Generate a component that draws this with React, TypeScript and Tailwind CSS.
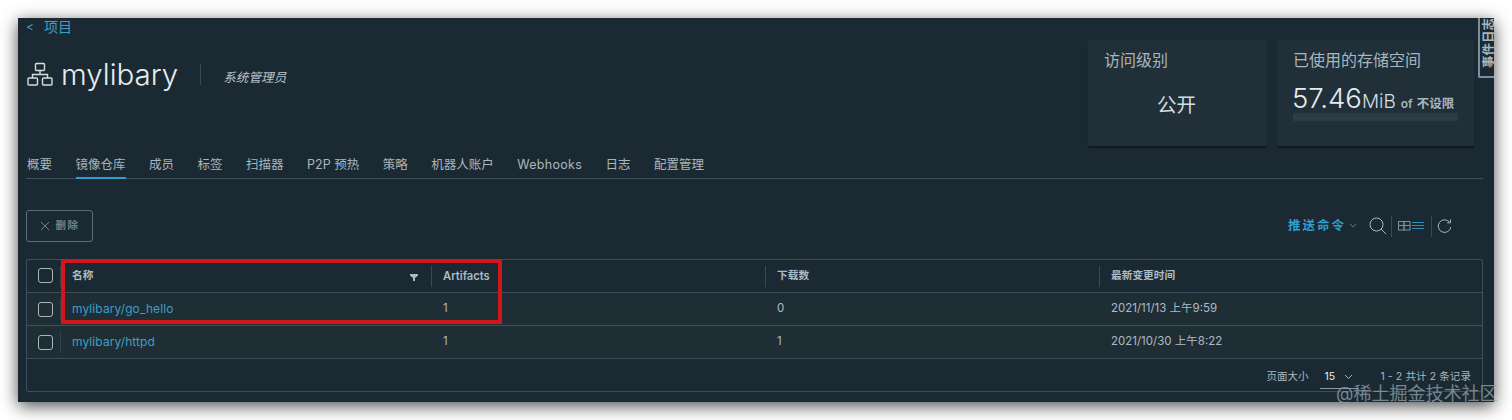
import React from "react";

const font = { fontFamily: '"Inter","Noto Sans CJK SC",sans-serif' };

function Checkbox() {
  return <span className="block w-[15px] h-[15px] rounded-[3px] border border-[#a9b6be] shrink-0" />;
}

function Row({ name, art, dl, time }: { name: string; art: string; dl: string; time: string }) {
  return (
    <div className="flex h-[33px] items-center border-b border-[#3d4f5a] bg-[#1f2d35] text-[11.5px] text-[#adbbc4]">
      <div className="w-[33px] flex justify-center pl-[3px]"><Checkbox /></div>
      <div className="w-[371px] pl-[11px] border-l border-[#33434d] h-[21px] flex items-center text-[#3d9fc4] text-[12px] tracking-[0.1px]">{name}</div>
      <div className="w-[334px] pl-[12px]">{art}</div>
      <div className="w-[334px] pl-[12px]">{dl}</div>
      <div className="flex-1 pl-[12px]">{time}</div>
    </div>
  );
}

function Th({ w, children, first }: { w: string; children: React.ReactNode; first?: boolean }) {
  return (
    <div className={`${w} h-[21px] flex items-center font-semibold text-[10.7px] text-[#adbbc4] ${first ? "pl-[11px] border-l border-[#33434d]" : "pl-[11px] border-l border-[#3a4a54]"}`}>
      {children}
    </div>
  );
}

export default function App() {
  return (
    <div className="relative w-[1512px] h-[420px] bg-white pt-[18px] pl-[18px] overflow-hidden" style={font}>
      <div className="relative w-[1476px] h-[384px] bg-[#1b2a32] shadow-[0_4px_16px_rgba(0,0,0,0.7)] overflow-hidden text-[#adbbc4] px-[8px]">
        {/* breadcrumb */}
        <div className="h-[18px] flex items-center gap-[10px] text-[14px] leading-none text-[#3d9fc4]">
          <span className="text-[12px]">&lt;</span><span>项目</span>
        </div>

        {/* header */}
        <div className="flex justify-between h-[92px]">
          <div className="flex items-center h-[77px]">
            <svg width="26" height="26" viewBox="0 0 26 26" fill="none" stroke="#d5dde2" strokeWidth="1.4" className="ml-[1px]">
              <rect x="8.5" y="1.5" width="9" height="7" rx="1" />
              <rect x="1" y="16" width="9.5" height="7" rx="1" />
              <rect x="15.5" y="16" width="9.5" height="7" rx="1" />
              <path d="M13 8.5V12.5M5.5 16V12.5H20.5V16" />
            </svg>
            <span className="ml-[8px] text-[29.5px] font-light leading-none text-[#e6ecef]">mylibary</span>
            <span className="ml-[22px] w-px h-[21px] bg-[#3a4a54]" />
            <span className="ml-[22px] mt-[8px] text-[12.6px] italic text-[#b9c5cc]">系统管理员</span>
          </div>
          <div className="flex gap-[10px] mt-[4px] mr-[12px] h-[106px]">
            <div className="w-[179px] h-[106px] bg-[#202f38] shadow-[0_2px_1px_#10191e] rounded-[2px] px-[16px] pt-[8px]">
              <div className="text-[16px] leading-[24px] text-[#a9b6be]">访问级别</div>
              <div className="mt-[19px] text-[19.5px] leading-[28px] text-[#d5dde2] text-center pr-[2px]">公开</div>
            </div>
            <div className="w-[197px] h-[106px] bg-[#202f38] shadow-[0_2px_1px_#10191e] rounded-[2px] pl-[16px] pr-[16px] pt-[8px]">
              <div className="text-[16px] leading-[24px] text-[#a9b6be]">已使用的存储空间</div>
              <div className="flex items-baseline mt-[9px] h-[32px] whitespace-nowrap">
                <span className="-ml-[1px] text-[27.5px] font-light leading-[34px] text-[#e6ecef]">57.46</span>
                <span className="text-[19px] font-light text-[#d5dde2]">MiB</span>
                <span className="ml-[5px] text-[12px] font-semibold text-[#a9b6be]">of</span>
                <span className="ml-[4px] text-[12.5px] font-semibold text-[#a9b6be]">不设限</span>
              </div>
              <div className="h-[8px] rounded-[1px] bg-[#2b3c46]" />
            </div>
          </div>
        </div>

        {/* tabs */}
        <div className="flex h-[41px] mt-[10px] items-end border-b border-[#3d4f5a] mr-[3px] text-[12.5px] leading-none text-[#a9b6be]">
          <div className="flex gap-[23.5px] pl-[1px] whitespace-nowrap">
            <span className="pb-[7px]">概要</span>
            <span className="pb-[5px] border-b-2 border-[#2e9fcf] -mb-px">镜像仓库</span>
            <span className="pb-[7px]">成员</span>
            <span className="pb-[7px]">标签</span>
            <span className="pb-[7px]">扫描器</span>
            <span className="pb-[7px]">P2P 预热</span>
            <span className="pb-[7px]">策略</span>
            <span className="pb-[7px]">机器人账户</span>
            <span className="pb-[7px] tracking-[0.3px]">Webhooks</span>
            <span className="pb-[7px]">日志</span>
            <span className="pb-[7px]">配置管理</span>
          </div>
        </div>

        {/* toolbar */}
        <div className="flex justify-between items-center h-[32px] mt-[31px] mr-[3px]">
          <div className="w-[67px] h-[32px] rounded-[3px] border border-[#5d6d77] flex items-center justify-center gap-[6px] text-[10.5px] font-semibold text-[#6f7f89] tracking-[1.5px]">
            <svg width="10" height="10" viewBox="0 0 10 10" stroke="#6f7f89" strokeWidth="1"><path d="M1 1L9 9M9 1L1 9" /></svg>
            删除
          </div>
          <div className="flex items-center mr-[31px] h-[24px]">
            <span className="text-[12.5px] font-bold text-[#2e9fcf] tracking-[2px]">推送命令</span>
            <svg width="8" height="6" viewBox="0 0 8 6" fill="none" stroke="#4f7f95" className="ml-[3px]"><path d="M1 1L4 4L7 1" /></svg>
            <svg width="18" height="18" viewBox="0 0 18 18" fill="none" stroke="#a9b6be" strokeWidth="1" className="ml-[12px]">
              <circle cx="7.5" cy="7.5" r="6.5" /><path d="M12 12L17 17" />
            </svg>
            <span className="ml-[4px] w-px h-[21px] bg-[#3a4a54]" />
            <svg width="27" height="10" viewBox="0 0 27 10" fill="none" strokeWidth="1" className="ml-[6px]">
              <g stroke="#7f8e98"><rect x="0.5" y="0.5" width="5.5" height="4" /><rect x="6" y="0.5" width="6" height="4" /><rect x="0.5" y="4.5" width="5.5" height="4.5" /><rect x="6" y="4.5" width="6" height="4.5" /></g>
              <path d="M14 1.5H26M14 4.5H26M14 7.5H26" stroke="#2e8fb5" />
            </svg>
            <span className="ml-[6px] w-px h-[21px] bg-[#3a4a54]" />
            <svg width="15" height="15" viewBox="0 0 15 15" fill="none" stroke="#a9b6be" strokeWidth="1" className="ml-[5px]">
              <path d="M12.5 3.2A6.3 6.3 0 1 0 13.8 8" /><path d="M13.5 0.5V3.8H10.2" />
            </svg>
          </div>
        </div>

        {/* table */}
        <div className="relative mt-[17px] mr-[3px] w-[1457px] h-[133px] border border-[#3d4f5a] rounded-[2px]">
          <div className="flex h-[33px] items-center border-b border-[#3d4f5a]">
            <div className="w-[33px] flex justify-center pl-[3px] -mt-[2px]"><Checkbox /></div>
            <Th w="w-[371px]" first>
              <span>名称</span>
              <svg width="8" height="7" viewBox="0 0 8 7" fill="#adbbc4" className="ml-auto mr-[13px] mt-[3px]"><path d="M0 0H8V1.5L5 4V7H3V4L0 1.5Z" /></svg>
            </Th>
            <Th w="w-[334px]"><span className="text-[11.2px]">Artifacts</span></Th>
            <Th w="w-[334px]">下载数</Th>
            <Th w="flex-1">最新变更时间</Th>
          </div>
          <Row name="mylibary/go_hello" art="1" dl="0" time="2021/11/13 上午9:59" />
          <Row name="mylibary/httpd" art="1" dl="1" time="2021/10/30 上午8:22" />
          <div className="flex h-[32px] pt-[4px] items-center justify-end pr-[11px] text-[10.5px] text-[#a9b6be]">
            <span>页面大小</span>
            <div className="ml-[12px] w-[39px] h-[24px] pl-[4px] pr-[6px] border-b border-[#8a98a2] flex items-center justify-between">
              <span className="text-[#e6ecef]">15</span>
              <svg width="9" height="6" viewBox="0 0 9 6" fill="none" stroke="#a9b6be"><path d="M1 1L4.5 4.5L8 1" /></svg>
            </div>
            <span className="ml-[21px] tracking-[0.1px] whitespace-nowrap">1 - 2 共计 2 条记录</span>
          </div>
          {/* red highlight */}
          <div className="absolute left-[34px] top-[-1px] w-[441px] h-[65px] border-[4px] border-[#d3161b]" />
        </div>

        {/* side tab */}
        <div className="absolute right-0 top-0 w-[16px] h-[60px] bg-[#1b2a32] border-l-2 border-b-2 border-[#7f8e98] rounded-bl-[2px] overflow-hidden flex items-end justify-end pb-[8px]">
          <span className="[writing-mode:vertical-rl] [text-orientation:sideways] rotate-180 text-[12.5px] font-semibold leading-none text-[#a9b6be] whitespace-nowrap -mr-[1px]">事件日志</span>
        </div>
      </div>

      {/* watermark */}
      <div className="absolute left-[1336px] top-[382px] text-[18px] leading-[24px] text-[#8d9ba5] opacity-80 whitespace-nowrap">@稀土掘金技术社区</div>
    </div>
  );
}
